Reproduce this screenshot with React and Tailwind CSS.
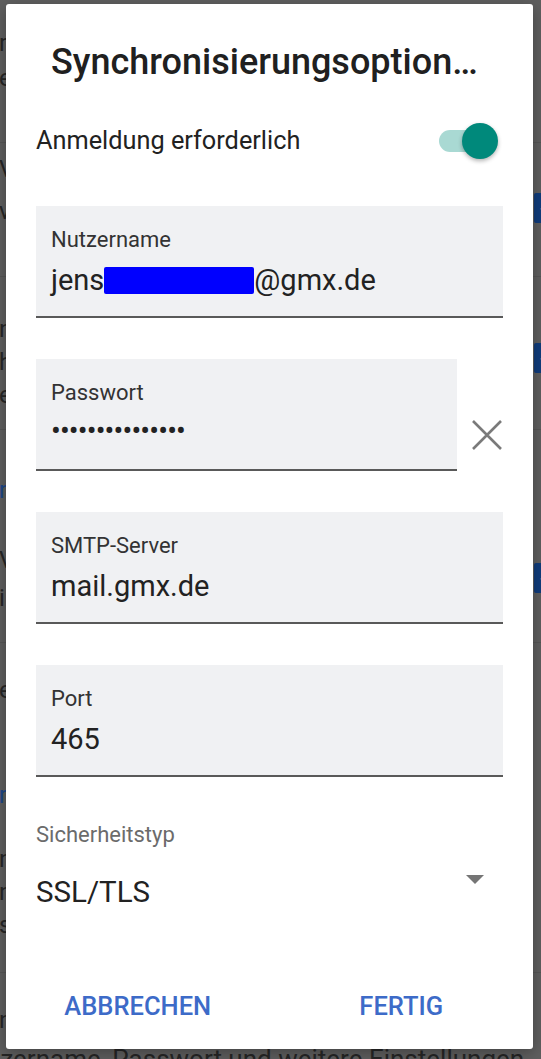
import React from "react";

const bgRows = [
  { h: 143, pt: 26, gap: 0, lines: [["r", "#262626"], ["e", "#262626"]], border: true },
  { h: 134, pt: 9, gap: 7, lines: [["V", "#262626"], ["v", "#262626"]], check: 50, border: true },
  { h: 153, pt: 36, gap: 0, lines: [["n", "#262626"], ["h", "#262626"], ["e", "#262626"]], check: 66, border: true, leading: 33 },
  { h: 100, pt: 43, gap: 0, lines: [["r", "#1d4687"]] },
  { h: 113, pt: 13, gap: 3, lines: [["V", "#262626"], ["i", "#262626"]], check: 33, border: true },
  { h: 90, pt: 30, gap: 0, lines: [["e", "#262626"]] },
  { h: 90, pt: 45, gap: 0, lines: [["r", "#1d4687"]] },
  { h: 150, pt: 20, gap: 0, lines: [["n", "#262626"], ["n", "#262626"], ["s", "#262626"]], border: true, leading: 33 },
];

function BgRow({ row }) {
  const lh = row.leading || 35;
  return (
    <div
      className={
        "relative flex shrink-0 justify-between " +
        (row.border ? "border-b border-[#565656]" : "")
      }
      style={{ height: row.h }}
    >
      <div className="flex flex-col" style={{ paddingTop: row.pt, rowGap: row.gap }}>
        {row.lines.map(([t, c], i) => (
          <div key={i} className="ml-[-1px] text-[24px]" style={{ color: c, lineHeight: lh + "px" }}>
            {t}
          </div>
        ))}
      </div>
      {row.check !== undefined && (
        <div className="mr-[-21px] flex h-[30px] w-[28px] items-center justify-center rounded-[2px] bg-[#103c7c]" style={{ marginTop: row.check }}>
          <svg width="20" height="20" viewBox="0 0 24 24" fill="none" stroke="#9fb3cf" strokeWidth="3">
            <path d="M4 12l5 5L20 6" />
          </svg>
        </div>
      )}
    </div>
  );
}

function Field({ label, value, children }) {
  return (
    <div className="h-[112px] flex-1 border-b-2 border-[#595959] bg-[#f0f1f3] pl-[15px] pt-[21px]">
      <div className="text-[22px] leading-[26px] text-[#333333]">{label}</div>
      {children ? children : <div className="mt-[10px] text-[29px] leading-[34px] text-[#222222]">{value}</div>}
    </div>
  );
}

export default function App() {
  return (
    <div className="relative h-[1059px] w-[541px] overflow-hidden bg-[#5f5f5f] font-[Roboto,sans-serif]">
      {/* dimmed page underneath */}
      <div className="flex w-[541px] flex-col">
        {bgRows.map((r, i) => (
          <BgRow key={i} row={r} />
        ))}
        <div className="flex flex-col pt-[30px]">
          <div className="ml-[-1px] text-[24px] leading-[35px] text-[#262626]">n</div>
          <div className="ml-[-41px] mt-[6px] whitespace-nowrap text-[26px] leading-[30px] text-[#262626]">
            Nutzername, Passwort und weitere Einstellungen
          </div>
        </div>
      </div>

      {/* dialog */}
      <div className="absolute left-[6px] top-[4px] flex h-[1045px] w-[527px] flex-col rounded-[3px] bg-white shadow-[0_4px_16px_rgba(0,0,0,0.3)]">
        <h1 className="whitespace-nowrap pl-[45px] pt-[37.5px] text-[36px] font-medium leading-[40px] text-[#202020]">
          Synchronisierungsoption…
        </h1>

        <div className="mt-[41.5px] flex h-[36px] items-center justify-between px-[30px]">
          <span className="text-[25.3px] leading-[30px] text-[#222222]">Anmeldung erforderlich</span>
          <div className="relative mr-[5px] h-[36px] w-[59px]">
            <div className="absolute left-0 top-[7px] h-[22px] w-[50px] rounded-full bg-[#a9d9d3]" />
            <div className="absolute right-0 top-0 h-[36px] w-[36px] rounded-full bg-[#00897b] shadow-[0_2px_4px_rgba(0,0,0,0.3)]" />
          </div>
        </div>

        <div className="mt-[46.5px] flex flex-col gap-[41px] px-[30px]">
          <div className="flex">
            <Field label="Nutzername">
              <div className="mt-[10px] flex items-center text-[29px] leading-[34px] text-[#222222]">
                <span>jens</span>
                <span className="mt-[2px] h-[27px] w-[150px] rounded-[2px] bg-[#0000ff]" />
                <span>@gmx.de</span>
              </div>
            </Field>
          </div>
          <div className="flex">
            <Field label="Passwort">
              <div className="mt-[8px] text-[29px] leading-[34px] tracking-[-0.85px] text-[#222222]">
                {"\u2022".repeat(15)}
              </div>
            </Field>
            <div className="ml-[14px] mt-[61px] h-[30px] w-[32px] shrink-0">
              <svg width="32" height="30" viewBox="0 0 32 30" fill="none" stroke="#7a7a7a" strokeWidth="2.6">
                <path d="M2 1L30 29M30 1L2 29" />
              </svg>
            </div>
          </div>
          <div className="flex">
            <Field label="SMTP-Server" value="mail.gmx.de" />
          </div>
          <div className="flex">
            <Field label="Port" value="465" />
          </div>
        </div>

        <div className="mt-[45.5px] px-[30px] text-[22px] leading-[26px] text-[#6b6b6b]">Sicherheitstyp</div>
        <div className="mt-[26.5px] flex items-start justify-between pl-[30px] pr-[49px]">
          <span className="text-[29.5px] leading-[34px] text-[#222222]">SSL/TLS</span>
          <svg width="18" height="9" viewBox="0 0 18 9">
            <path d="M0 0H18L9 9Z" fill="#757575" />
          </svg>
        </div>

        <div className="mt-[82.5px] flex">
          <button className="flex-1 text-center text-[25.5px] font-medium leading-[30px] text-[#3d6bc8]">ABBRECHEN</button>
          <button className="flex-1 text-center text-[25.5px] font-medium leading-[30px] text-[#3d6bc8]">FERTIG</button>
        </div>
      </div>
    </div>
  );
}
